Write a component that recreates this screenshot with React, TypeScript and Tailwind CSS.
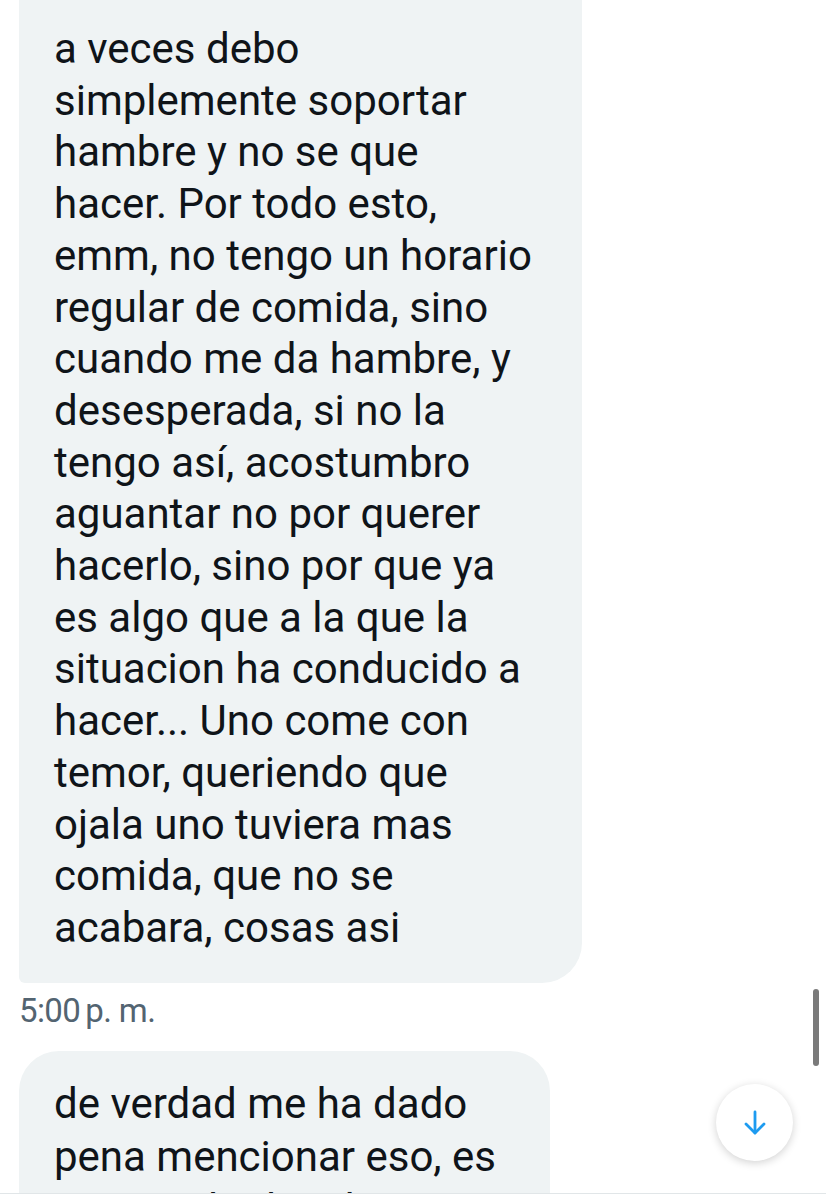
import React from "react";

const lines1 = [
  "a veces debo",
  "simplemente soportar",
  "hambre y no se que",
  "hacer. Por todo esto,",
  "emm, no tengo un horario",
  "regular de comida, sino",
  "cuando me da hambre, y",
  "desesperada, si no la",
  "tengo así, acostumbro",
  "aguantar no por querer",
  "hacerlo, sino por que ya",
  "es algo que a la que la",
  "situacion ha conducido a",
  "hacer... Uno come con",
  "temor, queriendo que",
  "ojala uno tuviera mas",
  "comida, que no se",
  "acabara, cosas asi",
];

const lines2 = [
  "de verdad me ha dado",
  "pena mencionar eso, es",
  "incomodo decirlo pero",
];

export default function App() {
  return (
    <div
      className="relative w-[826px] h-[1200px] overflow-hidden bg-white"
      style={{ fontFamily: "Roboto, 'Noto Sans', sans-serif" }}
    >
      <div className="h-[1193px] overflow-hidden flex flex-col">
        <div className="ml-[19px] w-[563px] bg-[#eff3f4] rounded-bl-[6px] rounded-br-[40px] pt-[23px] pb-[29px] pl-[35px]">
          {lines1.map((l, i) => (
            <div key={i} className="text-[42px] leading-[51.7px] text-[#0f1419] whitespace-nowrap">
              {l}
            </div>
          ))}
        </div>
        <div className="ml-[19px] mt-[10px] text-[33px] leading-[36px] text-[#536471] tracking-[-0.6px]">
          5:00<span className="ml-[5px]">p. m.</span>
        </div>
        <div className="ml-[19px] mt-[22px] w-[531px] bg-[#eff3f4] rounded-t-[40px] pt-[26px] pl-[35px] shrink-0">
          {lines2.map((l, i) => (
            <div key={i} className="text-[42px] leading-[53px] text-[#0f1419] whitespace-nowrap">
              {l}
            </div>
          ))}
        </div>
      </div>
      <div className="h-[7px] border-t border-[#e1e6e8] bg-white" />

      {/* scrollbar */}
      <div className="absolute left-[813px] top-[989px] w-[6px] h-[77px] rounded-full bg-[#7a7a7a]" />

      {/* scroll down button */}
      <div className="absolute left-[716px] top-[1084px] w-[77px] h-[77px] rounded-full bg-white shadow-[0_2px_8px_rgba(0,0,0,0.18)] flex items-center justify-center">
        <svg width="26" height="28" viewBox="0 0 26 28" fill="none">
          <path d="M13 3v21" stroke="#1d9bf0" strokeWidth="2.8" strokeLinecap="round" />
          <path d="M4 15l9 9 9-9" stroke="#1d9bf0" strokeWidth="2.8" strokeLinecap="round" strokeLinejoin="round" />
        </svg>
      </div>
    </div>
  );
}
